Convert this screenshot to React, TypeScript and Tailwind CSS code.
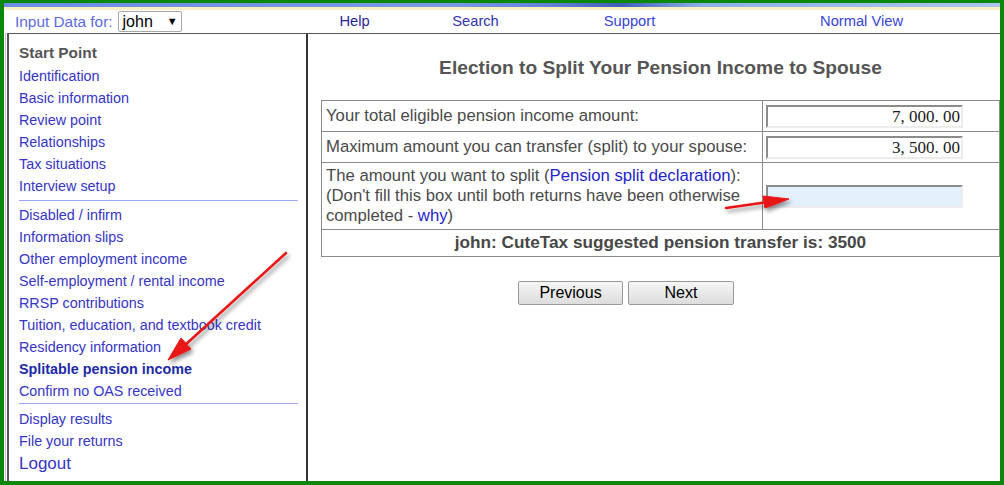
import React from "react";

const navTop = [
  "Identification",
  "Basic information",
  "Review point",
  "Relationships",
  "Tax situations",
  "Interview setup",
];
const navMid = [
  "Disabled / infirm",
  "Information slips",
  "Other employment income",
  "Self-employment / rental income",
  "RRSP contributions",
  "Tuition, education, and textbook credit",
  "Residency information",
];

function NavItem({ label, bold }: { label: string; bold?: boolean }) {
  return (
    <div
      className={
        bold
          ? "h-[22px] leading-[22px] text-[14.35px] font-bold text-[#1c2aa8] whitespace-nowrap"
          : "h-[22px] leading-[22px] text-[14.35px] text-[#3535c6] whitespace-nowrap"
      }
    >
      {label}
    </div>
  );
}

function Field({ value, blue }: { value?: string; blue?: boolean }) {
  return (
    <div
      className={
        (blue ? "bg-[#e4f1fc] " : "bg-white ") +
        "w-[197px] h-[23px] border-t-2 border-l-2 border-b-2 border-r-2 border-t-[#8c8c8c] border-l-[#8c8c8c] border-b-[#ececec] border-r-[#ececec] text-right pr-[1px] text-[17px] leading-[19px] text-[#1a1a1a]"
      }
      style={{ fontFamily: '"Liberation Serif", "DejaVu Serif", serif' }}
    >
      {value}
    </div>
  );
}

export default function App() {
  return (
    <div
      className="relative w-[1004px] h-[485px] overflow-hidden bg-white border-t-[3px] border-l-[4px] border-r-[4px] border-b-[4px] border-[#0b870b] flex flex-col"
      style={{ fontFamily: '"Liberation Sans", Arial, sans-serif' }}
    >
      {/* top bands */}
      <div className="h-[4px] bg-[linear-gradient(to_right,#6b8fe2,#7a9ae6_45%,#5f82d8_55%,#3f60b8_62%,#8db0ea_70%,#a9c6ec_100%)]" />
      <div className="h-[3px] bg-[#f8f0c2]" />

      {/* header */}
      <div className="h-[23px] flex items-center text-[14.7px]">
        <span className="ml-[11px] text-[15.4px] text-[#5d6be0] whitespace-nowrap">Input Data for:</span>
        <div className="ml-[5px] w-[64px] h-[21px] border border-[#a8a8a8] rounded-[2px] flex items-center pl-[4px] text-[16px] text-black">
          <span>john</span>
          <span className="ml-[14px] text-[11px]">▼</span>
        </div>
        <div className="ml-[118px] w-[110px] text-center text-[#26269a]">Help</div>
        <div className="ml-[11px] w-[110px] text-center text-[#3036b0]">Search</div>
        <div className="ml-[44px] w-[110px] text-center text-[#3744d6]">Support</div>
        <div className="ml-[117px] w-[120px] text-center text-[#3744d6]">Normal View</div>
      </div>

      {/* body */}
      <div className="flex-1 flex min-h-0">
        <div className="pl-[1px] flex">
          <div className="border-l border-[#c8c8c8] pl-[1px] flex">
            <div className="w-[301px] border-t border-t-[#5a5a5a] border-l-2 border-l-[#555] border-r-2 border-r-[#333] pl-[10px] pt-[6px]">
              <div className="h-[25px] leading-[25px] text-[15.4px] font-bold text-[#555]">Start Point</div>
              {navTop.map((l) => (
                <NavItem key={l} label={l} />
              ))}
              <div className="mt-[3px] mb-[3px] mr-[8px] h-[1px] bg-[#9aa8ff]" />
              {navMid.map((l) => (
                <NavItem key={l} label={l} />
              ))}
              <NavItem label="Splitable pension income" bold />
              <NavItem label="Confirm no OAS received" />
              <div className="mt-[1px] mb-[4px] mr-[8px] h-[1px] bg-[#9aa8ff]" />
              <NavItem label="Display results" />
              <NavItem label="File your returns" />
              <div className="h-[24px] leading-[24px] text-[17px] text-[#3535c6]">Logout</div>
            </div>
          </div>
        </div>

        <div className="flex-1 border-t border-[#5a5a5a] pl-[13px] overflow-hidden">
          <div className="w-[679px] pt-[23px] h-[45px] leading-[22px] text-center text-[19.2px] font-bold text-[#555] whitespace-nowrap">
            Election to Split Your Pension Income to Spouse
          </div>
          <table className="mt-[21px] w-[679px] border-collapse text-[16.7px] text-[#4a4a4a]">
            <tbody>
              <tr className="h-[31px]">
                <td className="w-[441px] border border-[#8a8a8a] pl-[4px] align-middle">
                  Your total eligible pension income amount:
                </td>
                <td className="border border-[#8a8a8a] pl-[3px] align-middle">
                  <Field value="7, 000. 00" />
                </td>
              </tr>
              <tr className="h-[31px]">
                <td className="border border-[#8a8a8a] pl-[4px] align-middle">
                  Maximum amount you can transfer (split) to your spouse:
                </td>
                <td className="border border-[#8a8a8a] pl-[3px] align-middle">
                  <Field value="3, 500. 00" />
                </td>
              </tr>
              <tr className="h-[67px]">
                <td className="border border-[#8a8a8a] pl-[4px] pr-[2px] leading-[20px] align-middle">
                  The amount you want to split (<span className="text-[#2323cc]">Pension split declaration</span>):
                  <br />
                  (Don't fill this box until both returns have been otherwise completed - <span className="text-[#2323cc]">why</span>)
                </td>
                <td className="border border-[#8a8a8a] pl-[3px] align-middle">
                  <Field blue />
                </td>
              </tr>
              <tr className="h-[27px]">
                <td colSpan={2} className="border border-[#8a8a8a] text-center font-bold text-[17.2px] text-[#474747] align-middle">
                  john: CuteTax suggested pension transfer is: 3500
                </td>
              </tr>
            </tbody>
          </table>
          <div className="mt-[24px] ml-[197px] flex gap-[5px]">
            <button className="w-[105px] h-[24px] border border-[#9a9a9a] rounded-[2px] bg-[linear-gradient(to_bottom,#f6f6f6,#dcdcdc)] text-[16px] text-black leading-[20px]">
              Previous
            </button>
            <button className="w-[106px] h-[24px] border border-[#9a9a9a] rounded-[2px] bg-[linear-gradient(to_bottom,#f6f6f6,#dcdcdc)] text-[16px] text-black leading-[20px]">
              Next
            </button>
          </div>
        </div>
      </div>

      {/* annotation arrows */}
      <svg
        className="absolute left-[-4px] top-[-3px] pointer-events-none"
        width="1004"
        height="485"
        viewBox="0 0 1004 485"
      >
        <defs>
          <filter id="sh" x="-20%" y="-20%" width="140%" height="140%">
            <feDropShadow dx="2" dy="3" stdDeviation="2" floodColor="#000" floodOpacity="0.45" />
          </filter>
        </defs>
        <g filter="url(#sh)" fill="#e81414" stroke="#e81414">
          <line x1="286" y1="253" x2="184" y2="346" strokeWidth="2.5" strokeLinecap="round" />
          <polygon points="168,360 181,338 191,349" strokeWidth="1" />
          <line x1="726" y1="208" x2="768" y2="202" strokeWidth="2.5" strokeLinecap="round" />
          <polygon points="789,199 763,196 765,208" strokeWidth="1" />
        </g>
      </svg>
    </div>
  );
}
